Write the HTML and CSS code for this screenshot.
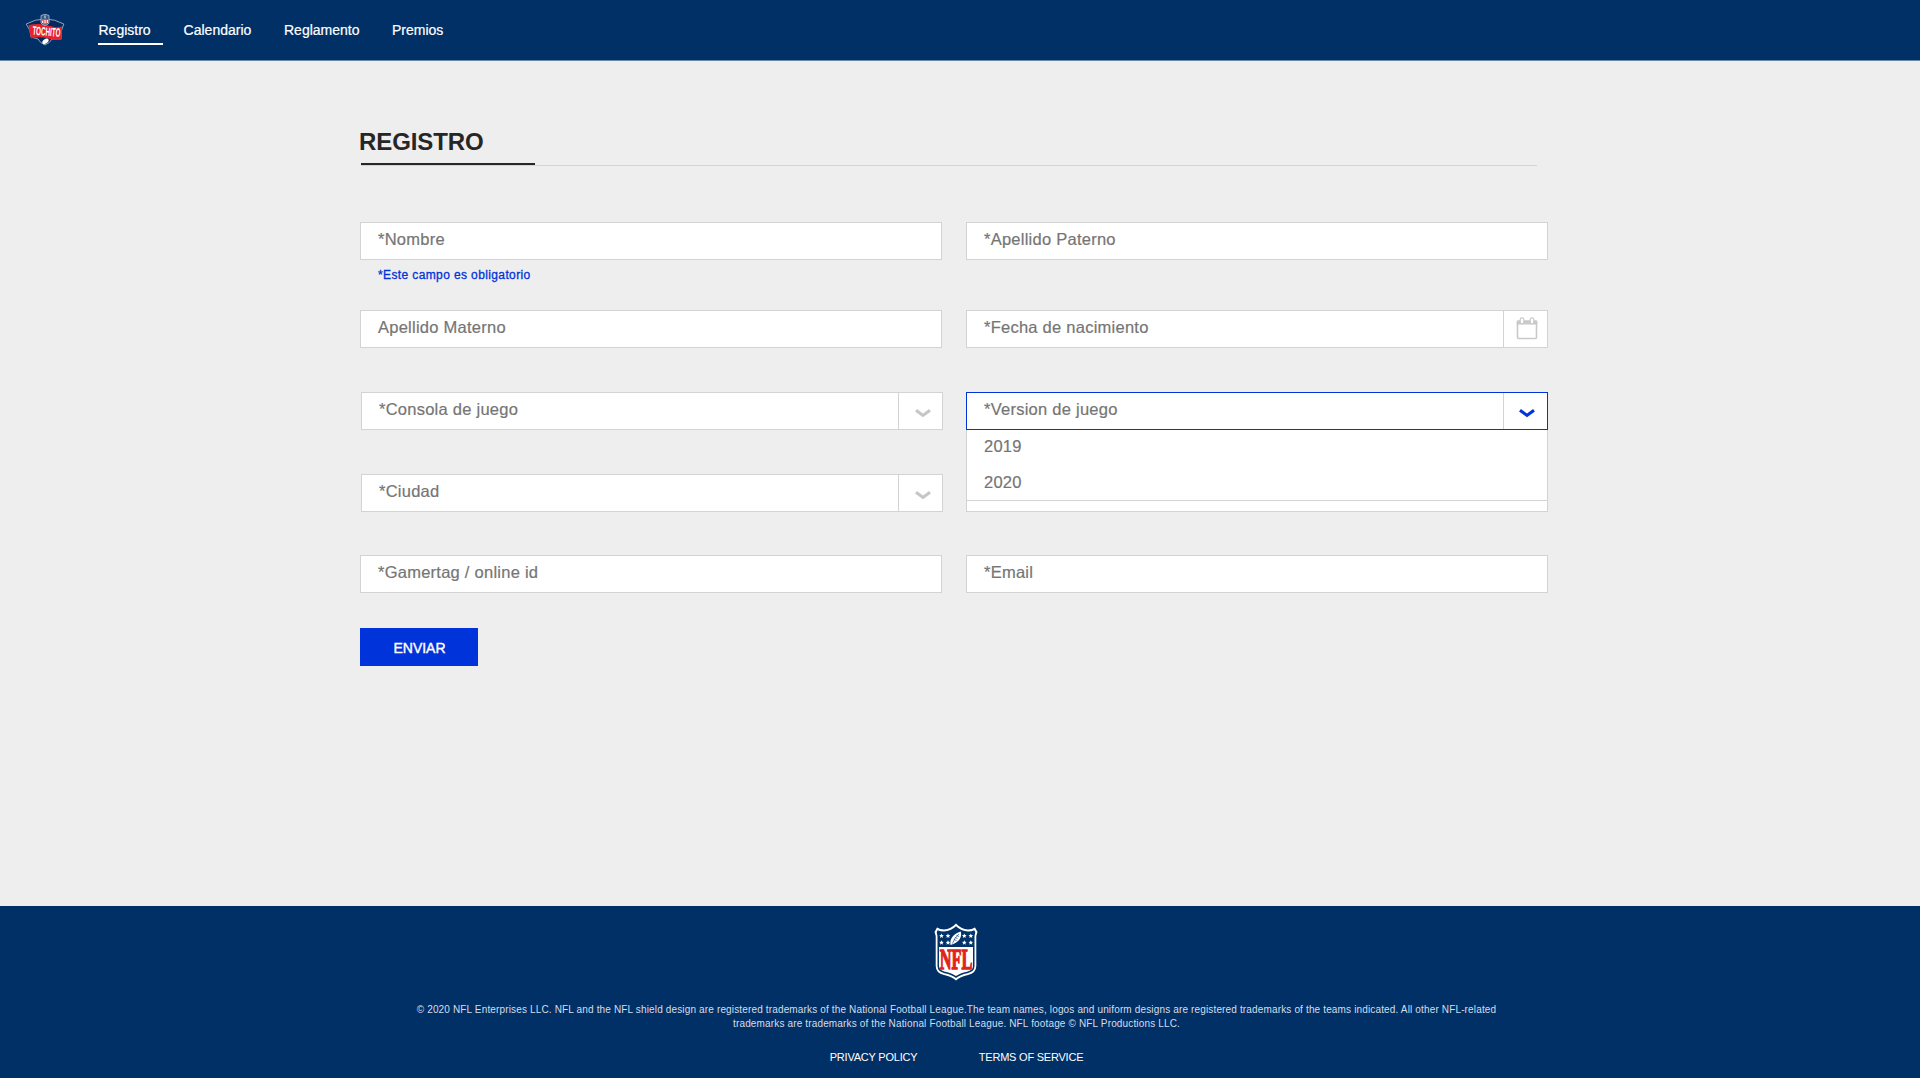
FILE: index.html
```html
<!DOCTYPE html>
<html lang="es">
<head>
<meta charset="utf-8">
<title>Registro</title>
<link rel="stylesheet" href="styles.css">
</head>
<body>
<header class="header">
  <svg class="brand" viewBox="0 0 40 32" width="40" height="32">
    <path d="M1.2 10 Q10 5 20 5 Q30 5 38.8 10 Q35 17 36 25 L27 25 Q25 29 20 31 Q15 29 13 25 L6 23 Q6 16 1.2 10Z" fill="#05295a" stroke="#8fa6bd" stroke-width="1"/>
    <path d="M3.500 11 Q16 8.500 25 12 Q31 14 37 12.500 L36.500 25.500 Q29 26.500 23 24.500 Q15 22 6 24.500Z" fill="#e9202e"/>
    <text class="brand-name" x="7.500" y="21.700" textLength="28" lengthAdjust="spacingAndGlyphs" transform="rotate(5 20 17)">TOCHITO</text>
    <path d="M16 1.500 L20 .3 L24 1.500 V9 Q23.500 10.500 20 11.500 Q16.500 10.500 16 9Z" fill="#36587e" stroke="#c8d3df" stroke-width=".7"/>
    <path d="M16.800 5.500H23.200V9L20 10.500 16.800 9Z" fill="#e76d7b"/>
    <path d="M17.500 7v2M20 6v3M22.500 6v3M20 1.500v3" stroke="#fff" stroke-width=".9"/>
    <ellipse cx="20.500" cy="27.300" rx="3.500" ry="2.200" fill="#fff" transform="rotate(-35 20.500 27.300)"/>
  </svg>
  <nav class="nav">
    <a class="nav-link nav-link-active">Registro</a>
    <a class="nav-link nav-calendar">Calendario</a>
    <a class="nav-link nav-rules">Reglamento</a>
    <a class="nav-link nav-prizes">Premios</a>
  </nav>
</header>
<main class="main">
  <div class="heading"><h1 class="title">REGISTRO</h1></div>
  <form class="form">
    <div class="cell">
      <div class="field"><span class="label">*Nombre</span></div>
      <p class="error">*Este campo es obligatorio</p>
    </div>
    <div class="cell"><div class="field"><span class="label">*Apellido Paterno</span></div></div>
    <div class="cell"><div class="field"><span class="label">Apellido Materno</span></div></div>
    <div class="cell">
      <div class="field"><span class="label">*Fecha de nacimiento</span>
        <span class="addon"><svg class="calendar" viewBox="0 0 22 23" width="22" height="23"><path d="M1.500 5V20.500Q1.500 21.500 2.500 21.500H19.500Q20.500 21.500 20.500 20.500V5" fill="none" stroke="#c9c9c9" stroke-width="1.600"/><path d="M.7 4.500Q.7 3.200 2 3.200H20Q21.300 3.200 21.300 4.500V7.500H.7Z" fill="#c9c9c9"/><rect x="4.200" y=".8" width="3.600" height="6" rx="1.800" fill="#fff" stroke="#c9c9c9" stroke-width="1.200"/><rect x="14.200" y=".8" width="3.600" height="6" rx="1.800" fill="#fff" stroke="#c9c9c9" stroke-width="1.200"/></svg></span>
      </div>
    </div>
    <div class="cell">
      <div class="field field-shift"><span class="label">*Consola de juego</span>
        <span class="addon"><svg class="chevron" viewBox="0 0 16 9" width="16" height="9"><path d="M1 1.200 8 6.400 15 1.200" fill="none" stroke="currentColor" stroke-width="3.100"/></svg></span>
      </div>
    </div>
    <div class="cell">
      <div class="field field-open"><span class="label">*Version de juego</span>
        <span class="addon"><svg class="chevron" viewBox="0 0 16 9" width="16" height="9"><path d="M1 1.200 8 6.400 15 1.200" fill="none" stroke="currentColor" stroke-width="3.100"/></svg></span>
        <div class="options"><div class="option">2019</div><div class="option">2020</div></div>
      </div>
    </div>
    <div class="cell">
      <div class="field field-shift"><span class="label">*Ciudad</span>
        <span class="addon"><svg class="chevron" viewBox="0 0 16 9" width="16" height="9"><path d="M1 1.200 8 6.400 15 1.200" fill="none" stroke="currentColor" stroke-width="3.100"/></svg></span>
      </div>
    </div>
    <div class="cell"><div class="field"></div></div>
    <div class="cell"><div class="field"><span class="label">*Gamertag / online id</span></div></div>
    <div class="cell"><div class="field"><span class="label">*Email</span></div></div>
  </form>
  <button class="submit" type="button">ENVIAR</button>
</main>
<footer class="footer">
  <svg class="shield" viewBox="0 0 44 58" width="44" height="58">
    <path d="M22 .5 Q27 6 34 6.500 Q38 6.500 41 4.500 L43.500 9 Q42 12 42.300 17 V43 Q42.300 50 34 52 Q26 53.500 22 57.500 Q18 53.500 10 52 Q1.700 50 1.700 43 V17 Q2 12 .5 9 L3 4.500 Q6 6.500 10 6.500 Q17 6 22 .5Z" fill="#fff"/>
    <path d="M22 3.300 Q27 8.200 34 8.500 Q38 8.500 40.300 7.300 L41.300 9.300 Q40.300 12 40.500 17 V43 Q40.500 48.500 33.500 50.200 Q26 51.700 22 55 Q18 51.700 10.500 50.200 Q3.500 48.500 3.500 43 V17 Q3.700 12 2.700 9.300 L3.700 7.300 Q6 8.500 10 8.500 Q17 8.200 22 3.300Z" fill="#013369"/>
    <path d="M5 24H39V43Q39 47.300 33 48.700Q26 50 22 53Q18 50 11 48.700Q5 47.300 5 43Z" fill="#fff"/>
    <g fill="#fff"><path id="star" d="M7.500 10.500l.7 1.500 1.600.1-1.200 1.100.4 1.700-1.500-.9-1.500.9.4-1.700-1.200-1.100 1.600-.1z"/><use href="#star" x="6.500"/><use href="#star" x="22.800"/><use href="#star" x="29.300"/><use href="#star" y="6.800"/><use href="#star" x="6.500" y="6.800"/><use href="#star" x="22.800" y="6.800"/><use href="#star" x="29.300" y="6.800"/></g>
    <path d="M16.500 22Q15 12.500 26.800 8.500Q29 18 16.500 22Z" fill="#fff"/>
    <path d="M18.500 20.500Q20 15 25 11M21 14.500l2.500 1M20 16.500l2.500 1M22.500 12.500l2.500 1" stroke="#013369" stroke-width=".6" fill="none"/>
    <text class="shield-name" x="5.700" y="45.500" textLength="32.600" lengthAdjust="spacingAndGlyphs">NFL</text>
  </svg>
  <p class="legal">© 2020 NFL Enterprises LLC. NFL and the NFL shield design are registered trademarks of the National Football League.The team names, logos and uniform designs are registered trademarks of the teams indicated. All other NFL-related<br>trademarks are trademarks of the National Football League. NFL footage © NFL Productions LLC.</p>
  <div class="links"><a>PRIVACY POLICY</a><a>TERMS OF SERVICE</a></div>
</footer>
</body>
</html>
```

FILE: styles.css
```css
* { box-sizing: border-box; }
body {
  margin: 0;
  height: 1078px;
  display: flex;
  flex-direction: column;
  background: #eee;
  font-family: "Liberation Sans", Arial, sans-serif;
}
svg { overflow: visible; }
.header {
  height: 61px;
  flex: none;
  display: flex;
  padding-left: 25px;
  background: #013067;
  border-bottom: 1px solid #6b87a6;
}
.brand { margin-top: 14px; }
.brand-name { font: bold 12px "Liberation Sans", sans-serif; fill: #fff; }
.nav { display: flex; margin-left: 33px; padding-top: 19px; }
.nav-link {
  height: 26px;
  line-height: 22px;
  font-size: 14px;
  color: #fff;
  -webkit-text-stroke: .2px #fff;
}
.nav-link-active { width: 65px; border-bottom: 2px solid #fff; text-indent: .5px; }
.nav-calendar { margin-left: 20.6px; width: 100.4px; }
.nav-rules { width: 108px; }
.main { flex: 1; padding: 66px 372px 0 360px; }
.heading {
  height: 39px;
  margin: 0 11px 0 1px;
  border-bottom: 1px solid #d3d3d3;
}
.title {
  width: 174px;
  height: 38px;
  margin: 0;
  border-bottom: 2px solid #262626;
  font-size: 24px;
  line-height: 29px;
  letter-spacing: -.1px;
  color: #262626;
  text-indent: -2px;
}
.form {
  display: grid;
  grid-template-columns: 582px 582px;
  grid-template-rows: 88px 82px 82px 81px 38px;
  column-gap: 24px;
  margin-top: 56px;
}
.field {
  position: relative;
  display: flex;
  justify-content: space-between;
  height: 38px;
  padding-left: 17px;
  border: 1px solid #d3d3d3;
  background: #fff;
  color: #757575;
  font-size: 16.5px;
  letter-spacing: .25px;
  -webkit-text-stroke: .2px currentColor;
}
.field-shift { margin: 0 -1px 0 1px; }
.field-open { border-color: #0033d9; z-index: 1; }
.label { line-height: 33px; }
.addon {
  width: 44px;
  display: flex;
  border-left: 1px solid #d3d3d3;
  color: #c6c6c6;
}
.field-open .addon { color: #0033d9; }
.calendar { margin: 6px 0 0 11.5px; }
.chevron { margin: 16px 0 0 16px; }
.field-open .chevron { margin-left: 15px; }
.options {
  position: absolute;
  top: 37px;
  left: -1px;
  width: 582px;
  height: 71px;
  padding-left: 17px;
  border: 1px solid #d3d3d3;
  border-top: 0;
  background: #fff;
}
.option { height: 36px; line-height: 32px; }
.error {
  margin: 8px 0 0 18px;
  font-size: 12px;
  line-height: 15px;
  letter-spacing: .38px;
  color: #0033d9;
  -webkit-text-stroke: .3px #0033d9;
}
.submit {
  display: block;
  width: 118px;
  height: 38px;
  margin-top: 35px;
  padding: 1px 0 0 1px;
  border: 0;
  background: #0033d9;
  color: #fff;
  font: 14px "Liberation Sans", Arial, sans-serif;
  -webkit-text-stroke: .4px #fff;
}
.footer {
  height: 172px;
  flex: none;
  display: flex;
  flex-direction: column;
  align-items: center;
  padding-right: 7px;
  background: #013067;
  color: #fff;
}
.shield { flex: none; margin: 16.5px 1px 0 0; }
.shield-name { font: bold 29px "Liberation Serif", serif; fill: #e2231a; stroke: #e2231a; stroke-width: 1.3px; }
.legal {
  margin: 22px 0 0;
  text-align: center;
  white-space: nowrap;
  font-size: 10px;
  line-height: 14px;
  letter-spacing: .15px;
  color: #d5dee8;
}
.links {
  display: flex;
  gap: 61.5px;
  margin-top: 19px;
  font-size: 11px;
  line-height: 14px;
  letter-spacing: -.22px;
}
```
